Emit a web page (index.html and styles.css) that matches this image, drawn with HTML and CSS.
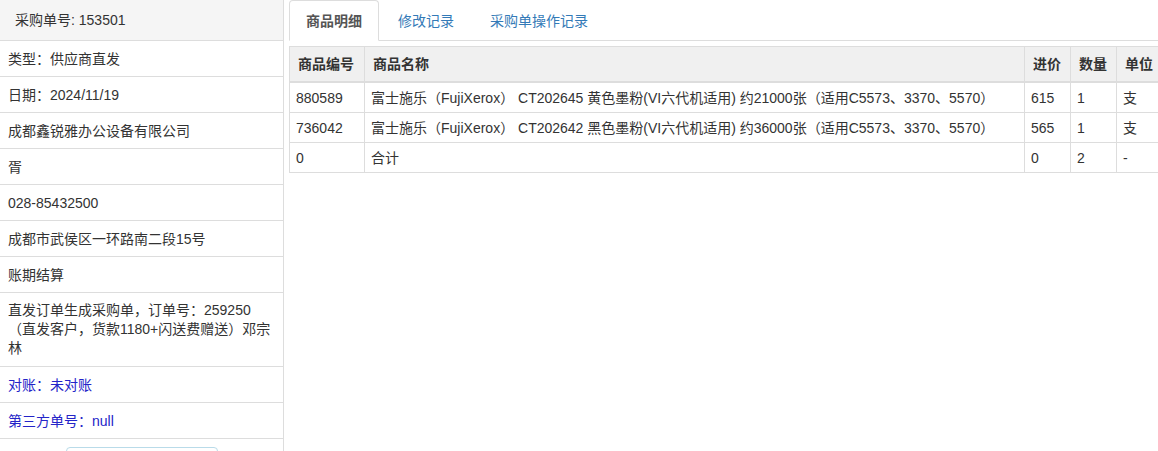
FILE: index.html
```html
<!DOCTYPE html>
<html lang="zh-CN">
<head>
    <meta charset="UTF-8">
    <title>采购单详情</title>
    <link rel="stylesheet" href="styles.css">
</head>
<body>
    <div class="page">
        <aside class="order-info">
            <div class="info-head">采购单号: 153501</div>
            <div class="info-row">类型：供应商直发</div>
            <div class="info-row">日期：2024/11/19</div>
            <div class="info-row">成都鑫锐雅办公设备有限公司</div>
            <div class="info-row">胥</div>
            <div class="info-row">028-85432500</div>
            <div class="info-row">成都市武侯区一环路南二段15号</div>
            <div class="info-row">账期结算</div>
            <div class="info-row multi">直发订单生成采购单，订单号：259250（直发客户，货款1180+闪送费赠送）邓宗林</div>
            <div class="info-row blue">对账：未对账</div>
            <div class="info-row blue">第三方单号：null</div>
            <div class="info-actions">
                <button class="btn-outline">&nbsp;</button>
            </div>
        </aside>

        <main class="detail">
            <ul class="tabs">
                <li class="active"><a href="#">商品明细</a></li>
                <li><a href="#">修改记录</a></li>
                <li><a href="#">采购单操作记录</a></li>
            </ul>

            <table class="goods">
                <thead>
                    <tr>
                        <th class="c-code">商品编号</th>
                        <th class="c-name">商品名称</th>
                        <th class="c-num">进价</th>
                        <th class="c-num">数量</th>
                        <th class="c-num">单位</th>
                    </tr>
                </thead>
                <tbody>
                    <tr>
                        <td>880589</td>
                        <td>富士施乐（FujiXerox） CT202645 黄色墨粉(VI六代机适用) 约21000张（适用C5573、3370、5570）</td>
                        <td>615</td>
                        <td>1</td>
                        <td>支</td>
                    </tr>
                    <tr>
                        <td>736042</td>
                        <td>富士施乐（FujiXerox） CT202642 黑色墨粉(VI六代机适用) 约36000张（适用C5573、3370、5570）</td>
                        <td>565</td>
                        <td>1</td>
                        <td>支</td>
                    </tr>
                    <tr>
                        <td>0</td>
                        <td>合计</td>
                        <td>0</td>
                        <td>2</td>
                        <td>-</td>
                    </tr>
                </tbody>
            </table>
        </main>
    </div>
</body>
</html>
```

FILE: styles.css
```css
* {
    margin: 0;
    padding: 0;
    box-sizing: border-box;
}

body {
    font-family: 'Liberation Sans', 'Noto Sans CJK SC', sans-serif;
    font-size: 14px;
    line-height: 20px;
    color: #333;
    background: #fff;
    overflow: hidden;
}

.page {
    display: flex;
    height: 451px;
}

.order-info {
    width: 284px;
    flex-shrink: 0;
    border-right: 1px solid #ddd;
}

.info-head {
    background: #f5f5f5;
    padding: 10px 15px;
    border-bottom: 1px solid #ddd;
}

.info-row {
    padding: 8px 8px 7px;
    border-bottom: 1px solid #ddd;
}

.info-row.multi {
    line-height: 19px;
    padding-bottom: 8px;
}

.info-row.blue {
    color: #2424c8;
}

.info-actions {
    display: flex;
    justify-content: center;
    padding-top: 8px;
}

.btn-outline {
    width: 152px;
    height: 32px;
    background: #fff;
    border: 1px solid #b9dbe9;
    border-radius: 4px;
}

.detail {
    flex: 1;
    min-width: 0;
    padding-left: 5px;
    overflow: hidden;
}

.tabs {
    display: flex;
    list-style: none;
    border-bottom: 1px solid #ddd;
    height: 41px;
}

.tabs li {
    margin-right: 2px;
}

.tabs a {
    display: block;
    padding: 10px 16px;
    border: 1px solid transparent;
    border-radius: 4px 4px 0 0;
    color: #337ab7;
    text-decoration: none;
}

.tabs li.active a {
    color: #555;
    font-weight: 700;
    background: #fff;
    border-color: #ddd;
    border-bottom-color: #fff;
    height: 41px;
}

.goods {
    margin-top: 5px;
    width: 873px;
    table-layout: fixed;
    border-collapse: collapse;
    border: 1px solid #ddd;
}

.goods th {
    text-align: left;
    font-weight: 700;
    background: #f0f0f0;
    padding: 7px 8px;
    border: 1px solid #ddd;
    border-bottom-width: 2px;
    white-space: nowrap;
}

.goods td {
    padding: 5px 6px 4px;
    border: 1px solid #ddd;
    white-space: nowrap;
}

.c-code {
    width: 75px;
}

.c-name {
    width: 660px;
}

.c-num {
    width: 46px;
}
```
